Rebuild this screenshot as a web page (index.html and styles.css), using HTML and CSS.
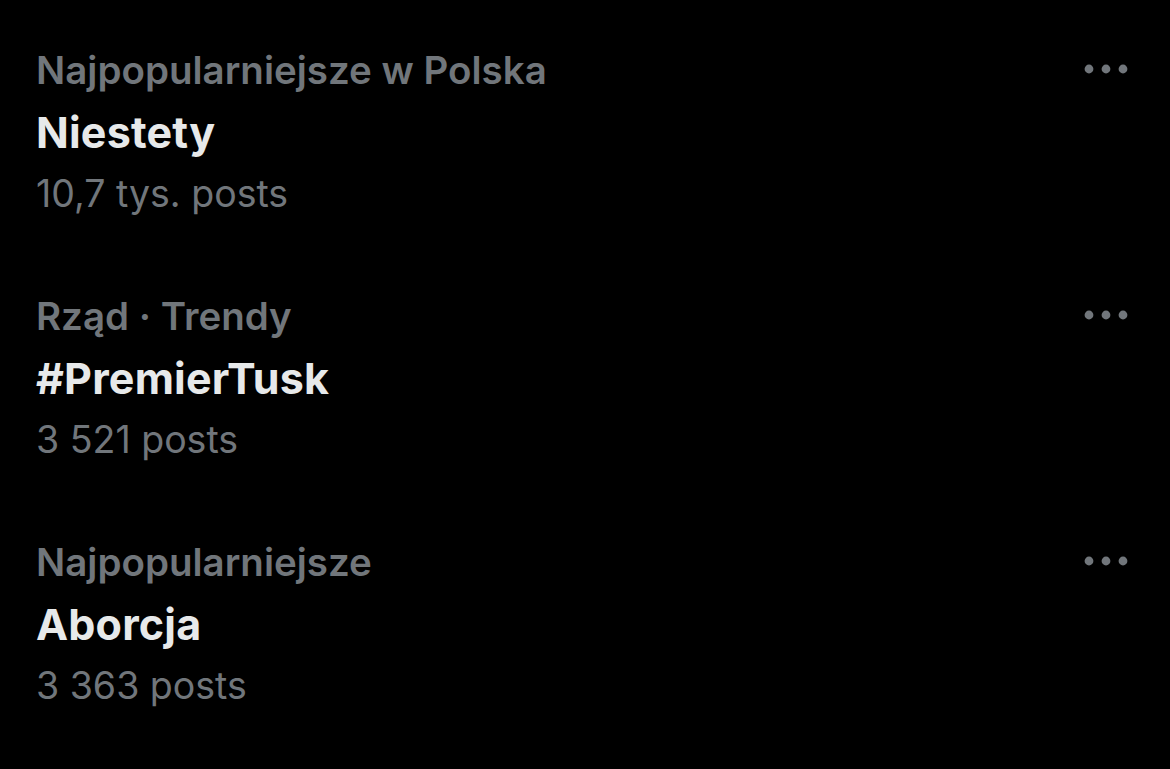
FILE: index.html
```html
<!DOCTYPE html>
<html lang="pl">
<head>
<meta charset="utf-8">
<link rel="stylesheet" href="styles.css">
</head>
<body>
<main class="trends">
  <section class="trend">
    <div class="row">
      <div class="meta">Najpopularniejsze w Polska</div>
      <svg class="more" viewBox="0 0 44 10" aria-hidden="true"><circle cx="5" cy="5" r="4.4"/><circle cx="22" cy="5" r="4.4"/><circle cx="39" cy="5" r="4.4"/></svg>
    </div>
    <div class="title">Niestety</div>
    <div class="count">10,7 tys. posts</div>
  </section>
  <section class="trend">
    <div class="row">
      <div class="meta">Rząd · Trendy</div>
      <svg class="more" viewBox="0 0 44 10" aria-hidden="true"><circle cx="5" cy="5" r="4.4"/><circle cx="22" cy="5" r="4.4"/><circle cx="39" cy="5" r="4.4"/></svg>
    </div>
    <div class="title">#PremierTusk</div>
    <div class="count">3 521 posts</div>
  </section>
  <section class="trend">
    <div class="row">
      <div class="meta">Najpopularniejsze</div>
      <svg class="more" viewBox="0 0 44 10" aria-hidden="true"><circle cx="5" cy="5" r="4.4"/><circle cx="22" cy="5" r="4.4"/><circle cx="39" cy="5" r="4.4"/></svg>
    </div>
    <div class="title">Aborcja</div>
    <div class="count">3 363 posts</div>
  </section>
</main>
</body>
</html>
```
FILE: styles.css
```css
html, body {
  margin: 0;
  padding: 0;
  background: #000;
  height: 100%;
}
body {
  font-family: Inter, "Noto Sans", "Liberation Sans", sans-serif;
  overflow: hidden;
}
.trends {
  display: flex;
  flex-direction: column;
  padding: 39px 42px 0 36px;
}
.trend {
  height: 246px;
  display: flex;
  flex-direction: column;
}
.row {
  display: flex;
  align-items: center;
  justify-content: space-between;
}
.meta {
  color: #71767b;
  font-size: 38.5px;
  font-weight: 600;
  line-height: 62px;
  height: 62px;
}
.title {
  color: #e7e9ea;
  font-size: 43px;
  font-weight: 700;
  line-height: 62px;
  letter-spacing: 0.2px;
}
.count {
  color: #71767b;
  font-size: 37.5px;
  font-weight: 400;
  line-height: 62px;
}
.more {
  width: 44px;
  height: 10px;
  fill: #71767b;
  margin-top: -2px;
}
```
